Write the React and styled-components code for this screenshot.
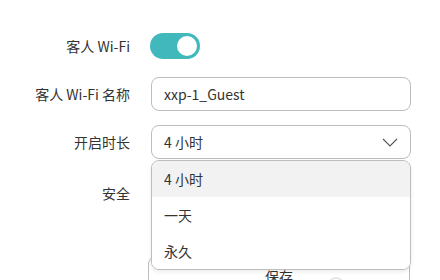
import React, { useState } from 'react';
import styled, { createGlobalStyle } from 'styled-components';

const GlobalStyle = createGlobalStyle`
  html, body {
    margin: 0;
    padding: 0;
    background: #fff;
  }
  body {
    font-family: "Noto Sans CJK SC", "Noto Sans", sans-serif;
    color: #333;
    font-size: 14px;
  }
`;

const Form = styled.div`
  display: grid;
  grid-template-columns: 130px 260px;
  column-gap: 21px;
  row-gap: 14px;
  padding-top: 29px;
  align-items: center;
`;

const Label = styled.div`
  text-align: right;
  font-size: 14px;
  line-height: 20px;
  color: #333;
  white-space: nowrap;
`;

const Cell = styled.div`
  position: relative;
  height: ${(p) => p.h || 34}px;
  display: flex;
  align-items: center;
`;

const Switch = styled.div`
  width: 50px;
  height: 26px;
  border-radius: 13px;
  background: #40b8bc;
  position: relative;
  margin-left: -1px;
  &::after {
    content: '';
    position: absolute;
    top: 3px;
    right: 3px;
    width: 20px;
    height: 20px;
    border-radius: 50%;
    background: #fff;
  }
`;

const Field = styled.div`
  box-sizing: border-box;
  width: 100%;
  height: 34px;
  border: 1px solid #bdbdbd;
  border-radius: 8px;
  padding: 0 12px;
  display: flex;
  align-items: center;
  justify-content: space-between;
  background: #fff;
  font-size: 14px;
  color: #333;
`;

const Menu = styled.div`
  position: absolute;
  top: 35px;
  left: 0;
  right: 0;
  z-index: 5;
  box-sizing: border-box;
  background: #fff;
  border: 1px solid #bdbdbd;
  border-radius: 8px;
  overflow: hidden;
  box-shadow: 0 2px 4px rgba(0, 0, 0, 0.08);
`;

const Option = styled.div`
  height: 36px;
  display: flex;
  align-items: center;
  padding-left: 12px;
  font-size: 14px;
  color: #333;
  background: ${(p) => (p.active ? '#f2f2f2' : '#fff')};
`;

const SaveRow = styled.div`
  grid-column: 2;
  margin-top: 29px;
  margin-left: -3px;
  width: 262px;
`;

const SaveButton = styled.button`
  box-sizing: border-box;
  width: 100%;
  height: 40px;
  border: 1px solid #bdbdbd;
  border-radius: 8px;
  background: #fff;
  font-family: inherit;
  font-size: 14px;
  color: #333;
  position: relative;
  padding: 0;
`;

const Spinner = styled.span`
  position: absolute;
  left: 178px;
  top: 20px;
  width: 14px;
  height: 14px;
  border-radius: 50%;
  border: 2px solid #e6e6e6;
`;

const Chevron = () => (
  <svg width="16" height="9" viewBox="0 0 16 9" fill="none">
    <path d="M1 1l7 7 7-7" stroke="#555" strokeWidth="1.1" />
  </svg>
);

export default function App() {
  const options = ['4 小时', '一天', '永久'];
  const [selected] = useState(0);

  return (
    <>
      <GlobalStyle />
      <Form>
        <Label>客人 Wi-Fi</Label>
        <Cell>
          <Switch />
        </Cell>

        <Label>客人 Wi-Fi 名称</Label>
        <Cell>
          <Field>xxp-1_Guest</Field>
        </Cell>

        <Label>开启时长</Label>
        <Cell>
          <Field>
            <span>{options[selected]}</span>
            <Chevron />
          </Field>
          <Menu>
            {options.map((o, i) => (
              <Option key={o} active={i === selected}>
                {o}
              </Option>
            ))}
          </Menu>
        </Cell>

        <Label>安全</Label>
        <Cell h={40}>
          <Field />
        </Cell>

        <SaveRow>
          <SaveButton>
            保存
            <Spinner />
          </SaveButton>
        </SaveRow>
      </Form>
    </>
  );
}
